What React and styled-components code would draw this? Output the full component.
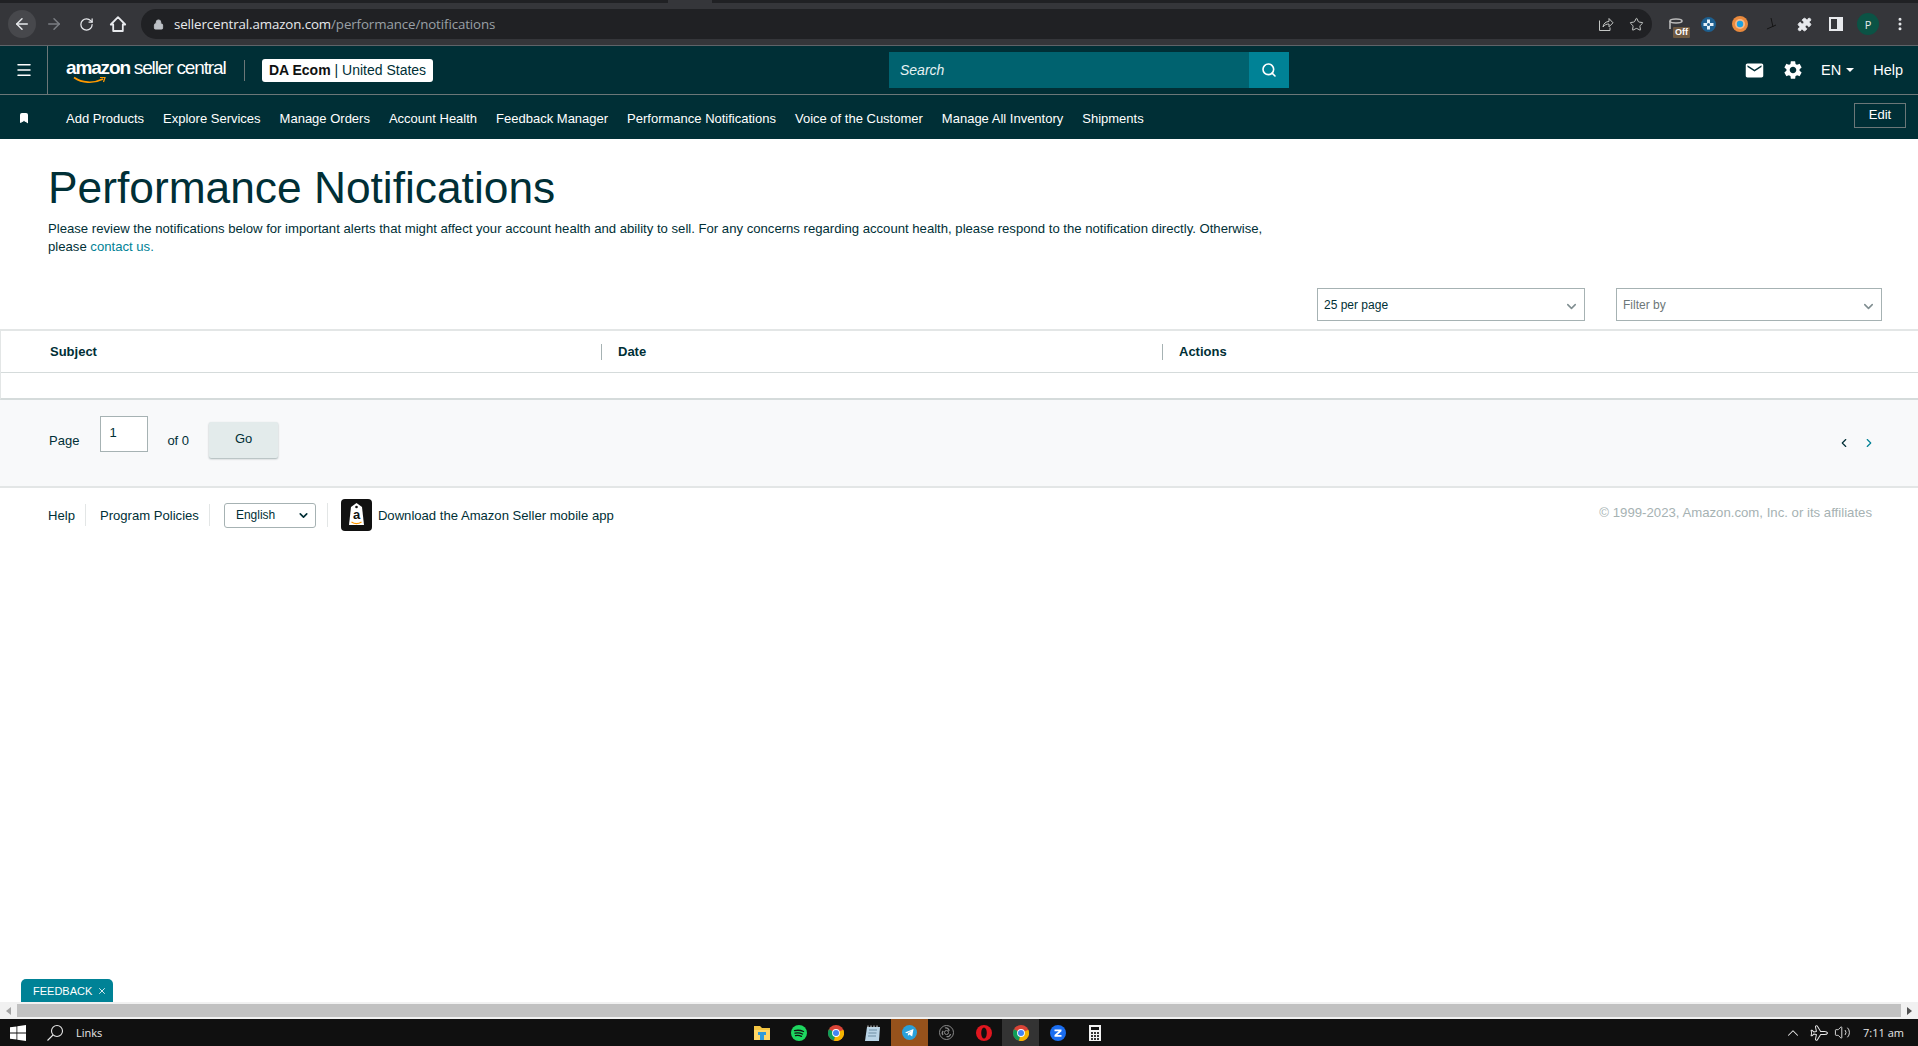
import React from 'react';
import styled, { createGlobalStyle } from 'styled-components';
import {
  ArrowLeft,
  ArrowRight,
  RotateCw,
  Lock,
  Star,
  Puzzle,
  Search,
  Menu,
  Bookmark,
  ChevronDown,
  ChevronLeft,
  ChevronRight,
  ChevronUp,
  X,
  MoreVertical,
  Plane,
  Volume2,
} from 'lucide-react';
import { MdEmail, MdSettings } from 'react-icons/md';

const navLinks = [
  'Add Products',
  'Explore Services',
  'Manage Orders',
  'Account Health',
  'Feedback Manager',
  'Performance Notifications',
  'Voice of the Customer',
  'Manage All Inventory',
  'Shipments',
];

const columns = ['Subject', 'Date', 'Actions'];

const GlobalStyle = createGlobalStyle`
  html, body {
    margin: 0;
    height: 100%;
    overflow: hidden;
    background: #fff;
    font-family: "Liberation Sans", Arial, sans-serif;
  }
  * {
    box-sizing: border-box;
  }
`;

const Page = styled.div`
  height: 100vh;
  display: flex;
  flex-direction: column;
`;

/* browser chrome */
const TabStrip = styled.div`
  height: 3px;
  background: #202124;
  flex: none;
`;

const ActiveTab = styled.div`
  width: 44px;
  height: 3px;
  margin-left: 668px;
  background: #35363a;
`;

const Toolbar = styled.div`
  height: 43px;
  flex: none;
  display: flex;
  align-items: center;
  background: #35363a;
  border-bottom: 1px solid #5f6368;
  padding-left: 8px;
`;

const ToolButton = styled.div`
  width: 28px;
  height: 28px;
  flex: none;
  margin-right: 4px;
  border-radius: 50%;
  display: flex;
  align-items: center;
  justify-content: center;
  color: ${(p) => p.$color || '#e8eaed'};
  background: ${(p) => (p.$active ? '#47484c' : 'transparent')};
  position: relative;
`;

const Omnibox = styled.div`
  width: 1511px;
  height: 30px;
  flex: none;
  margin-left: 5px;
  margin-right: 10px;
  border-radius: 15px;
  background: #202124;
  display: flex;
  align-items: center;
  padding: 0 8px 0 12px;
  color: #bdc1c6;
`;

const Url = styled.div`
  margin-left: 10px;
  font-family: "Open Sans", sans-serif;
  font-size: 13.3px;
  letter-spacing: -0.1px;
  color: #9aa0a6;
  flex: 1;
  span {
    color: #e8eaed;
  }
`;

const OmniIcon = styled.div`
  margin-left: 15px;
  display: flex;
  color: #c4c7c5;
`;

const OffBadge = styled.span`
  position: absolute;
  right: 0;
  bottom: 0;
  background: #6f5a41;
  color: #fff;
  font-size: 9px;
  font-weight: bold;
  line-height: 11px;
  padding: 0 2px;
  border-radius: 1px;
`;

const Avatar = styled.div`
  width: 22px;
  height: 22px;
  border-radius: 50%;
  background: #0b5345;
  color: #e8eaed;
  font-family: "Open Sans", sans-serif;
  font-size: 11px;
  display: flex;
  align-items: center;
  justify-content: center;
`;

/* seller central header */
const TopNav = styled.header`
  height: 49px;
  flex: none;
  display: flex;
  align-items: center;
  background: #002f36;
  border-bottom: 1px solid #6c7778;
  color: #fff;
`;

const MenuCell = styled.div`
  width: 48px;
  height: 100%;
  display: flex;
  align-items: center;
  justify-content: center;
  border-right: 1px solid #6c7778;
`;

const Logo = styled.div`
  position: relative;
  margin-left: 18px;
  width: 160px;
  height: 30px;
  display: flex;
  align-items: baseline;
  white-space: nowrap;
  font-size: 19px;
  line-height: 26px;
  letter-spacing: -1.15px;
`;

const LogoBold = styled.b`
  font-weight: bold;
  margin-right: 4px;
`;

const Smile = styled.svg`
  position: absolute;
  left: 7px;
  top: 21px;
`;

const AccountBox = styled.div`
  margin-left: 18px;
  padding-left: 18px;
  position: relative;
  &::before {
    content: '';
    position: absolute;
    left: 0;
    top: 1px;
    bottom: 1px;
    width: 1px;
    background: #6c7778;
  }
`;

const AccountPill = styled.div`
  width: 171px;
  height: 23px;
  border-radius: 3px;
  background: #fff;
  color: #002f36;
  font-size: 14px;
  line-height: 23px;
  text-align: center;
  white-space: nowrap;
  b {
    color: #0f1111;
  }
`;

const SearchBox = styled.div`
  margin-left: 456px;
  width: 400px;
  height: 36px;
  display: flex;
  background: #00626f;
`;

const SearchText = styled.div`
  flex: 1;
  padding-left: 11px;
  font-size: 14px;
  font-style: italic;
  line-height: 36px;
  color: #e6f1f2;
`;

const SearchButton = styled.div`
  width: 40px;
  display: flex;
  align-items: center;
  justify-content: center;
  background: #008296;
`;

const TopActions = styled.div`
  margin-left: auto;
  padding-right: 15px;
  display: flex;
  align-items: center;
`;

const ActionIcon = styled.div`
  display: flex;
  margin-right: ${(p) => p.$gap}px;
`;

const ActionText = styled.div`
  font-size: 14.5px;
  margin-right: ${(p) => p.$gap || 0}px;
  display: flex;
  align-items: center;
`;

const Caret = styled.span`
  margin-left: 5px;
  width: 0;
  height: 0;
  border-left: 4px solid transparent;
  border-right: 4px solid transparent;
  border-top: 4px solid #fff;
`;

const FavBar = styled.nav`
  height: 44px;
  flex: none;
  display: flex;
  align-items: center;
  background: #002f36;
  color: #fff;
  padding: 0 12px 0 18px;
`;

const FavIcon = styled.div`
  width: 48px;
  display: flex;
  margin-top: 1px;
`;

const FavLinks = styled.div`
  display: flex;
  gap: 19px;
  font-size: 13px;
  margin-top: 2px;
`;

const EditButton = styled.div`
  margin-left: auto;
  width: 52px;
  height: 25px;
  margin-top: -3px;
  border: 1px solid #6c7778;
  font-size: 13px;
  line-height: 22px;
  text-align: center;
`;

/* page content */
const Main = styled.main`
  flex: 1;
  min-height: 0;
  display: flex;
  flex-direction: column;
  color: #002f36;
`;

const Heading = styled.div`
  padding: 28px 48px 0;
`;

const Title = styled.h1`
  margin: 0;
  font-size: 44.3px;
  font-weight: normal;
  line-height: 41px;
  padding: 0;
`;

const Intro = styled.p`
  margin: 12px 0 0;
  width: 1240px;
  font-size: 13.13px;
  line-height: 18px;
  color: #002f36;
  a {
    color: #008296;
    text-decoration: none;
  }
`;

const Filters = styled.div`
  margin-top: 32px;
  padding-right: 36px;
  display: flex;
  justify-content: flex-end;
  gap: 31px;
`;

const SelectBox = styled.div`
  width: ${(p) => p.$width}px;
  height: 33px;
  border: 1px solid #a6b2b3;
  padding: 0 6px;
  display: flex;
  align-items: center;
  justify-content: space-between;
  font-size: 12px;
  color: ${(p) => (p.$muted ? '#6c7778' : '#002f36')};
  svg {
    color: #7f8d90;
    margin-top: 3px;
    margin-right: -1px;
  }
`;

const Table = styled.div`
  margin-top: 8px;
  border-top: 2px solid #e3e6e6;
  border-left: 1px solid #e3e6e6;
  border-bottom: 2px solid #d5dbdb;
`;

const HeadRow = styled.div`
  height: 42px;
  display: grid;
  grid-template-columns: 600px 561px 1fr;
  align-items: center;
  border-bottom: 1px solid #d5dbdb;
`;

const HeadCell = styled.div`
  height: 16px;
  line-height: 16px;
  padding-left: ${(p) => (p.$first ? 49 : 16)}px;
  border-left: ${(p) => (p.$first ? 'none' : '1px solid #a6b2b3')};
  font-size: 13px;
  font-weight: bold;
  color: #002f36;
`;

const EmptyRow = styled.div`
  height: 25px;
`;

const Pagination = styled.div`
  height: 88px;
  flex: none;
  display: flex;
  align-items: flex-start;
  padding: 16px 42px 0 49px;
  background: #f8f9fa;
  border-bottom: 2px solid #e3e6e6;
  font-size: 13px;
  color: #002f36;
`;

const PageLabel = styled.div`
  margin-top: 17px;
`;

const PageInput = styled.div`
  width: 48px;
  height: 36px;
  margin: 0 19px 0 21px;
  padding: 8px 8px;
  background: #fff;
  border: 1px solid #a6b2b3;
`;

const GoButton = styled.div`
  width: 69px;
  height: 36px;
  margin: 6px 0 0 20px;
  border-radius: 2px;
  background: #e3ebeb;
  box-shadow: 0 1px 2px #a6b2b3;
  text-align: center;
  line-height: 33px;
`;

const Pager = styled.div`
  margin: 20px 0 0 auto;
  display: flex;
  gap: 11px;
  color: #002f36;
`;

const Footer = styled.footer`
  padding: 11px 46px 0 48px;
  display: flex;
  align-items: center;
  font-size: 13.1px;
  color: #002f36;
`;

const FooterLink = styled.div`
  padding-right: 10px;
  margin-right: 14px;
  height: 22px;
  line-height: 24px;
  border-right: 1px solid #e3e6e6;
`;

const LangSelect = styled.div`
  width: 92px;
  height: 25px;
  padding: 0 5px 0 11px;
  border: 1px solid #a6b2b3;
  border-radius: 3px;
  font-size: 12px;
  display: flex;
  align-items: center;
  justify-content: space-between;
`;

const FooterDivider = styled.div`
  width: 1px;
  height: 24px;
  margin: 0 13px 0 11px;
  background: #e3e6e6;
`;

const AppBadge = styled.div`
  width: 31px;
  height: 32px;
  margin-right: 6px;
  border-radius: 4px;
  background: #111;
  display: flex;
`;

const Copyright = styled.div`
  margin: -6px 0 0 auto;
  font-size: 13.2px;
  color: #a6b2b3;
`;

const Feedback = styled.div`
  margin: auto 0 0 21px;
  width: 92px;
  height: 23px;
  flex: none;
  display: flex;
  align-items: center;
  gap: 5px;
  padding-left: 12px;
  border-radius: 5px 5px 0 0;
  background: #008296;
  color: #fff;
  font-size: 11px;
`;

const ScrollBar = styled.div`
  height: 17px;
  flex: none;
  display: flex;
  align-items: center;
  background: #f1f1f1;
`;

const ScrollArrow = styled.span`
  width: 17px;
  flex: none;
  display: flex;
  justify-content: center;
  &::before {
    content: '';
    border-top: 4px solid transparent;
    border-bottom: 4px solid transparent;
    ${(p) => (p.$right ? 'border-left: 5px solid #505050;' : 'border-right: 5px solid #a3a3a3;')}
  }
`;

const ScrollThumb = styled.div`
  flex: 1;
  height: 13px;
  background: #c1c1c1;
`;

/* windows taskbar */
const Taskbar = styled.div`
  height: 27px;
  flex: none;
  display: flex;
  align-items: center;
  background: #101010;
  color: #e8e8e8;
  font-family: "Open Sans", sans-serif;
  font-size: 11px;
  position: relative;
`;

const StartCell = styled.div`
  margin-left: 10px;
  display: flex;
`;

const SearchCell = styled.div`
  margin-left: 20px;
  display: flex;
`;

const LinksLabel = styled.div`
  margin-left: 12px;
  width: 667px;
`;

const TaskIcons = styled.div`
  height: 100%;
  display: flex;
`;

const TaskIcon = styled.div`
  width: 37px;
  height: 100%;
  display: flex;
  align-items: center;
  justify-content: center;
  background: ${(p) => p.$bg || 'transparent'};
`;

const Tray = styled.div`
  margin-left: auto;
  display: flex;
  align-items: center;
  gap: 7px;
  padding-right: 14px;
  height: 100%;
`;

const TrayPlane = styled.div`
  display: flex;
  transform: rotate(45deg);
`;

const TrayTime = styled.div`
  margin-left: 5px;
`;

const ChromeGlyph = ({ size = 16 }) => (
  <svg width={size} height={size} viewBox="0 0 16 16">
    <circle cx="8" cy="8" r="8" fill="#db4437" />
    <path d="M8 8 1 4.2A8 8 0 0 0 6 15.8z" fill="#0f9d58" />
    <path d="M8 8 15.3 4.8A8 8 0 0 1 6 15.8z" fill="#f4b400" />
    <circle cx="8" cy="8" r="3.9" fill="#fff" />
    <circle cx="8" cy="8" r="3" fill="#4285f4" />
  </svg>
);

const App = () => {
  return (
    <Page>
      <GlobalStyle />
      <TabStrip>
        <ActiveTab />
      </TabStrip>
      <Toolbar>
        <ToolButton $active>
          <ArrowLeft size={18} strokeWidth={2} />
        </ToolButton>
        <ToolButton $color="#7b7e83">
          <ArrowRight size={18} strokeWidth={2} />
        </ToolButton>
        <ToolButton>
          <RotateCw size={15} strokeWidth={2} />
        </ToolButton>
        <ToolButton>
          <svg width="18" height="18" viewBox="0 0 18 18" fill="none" stroke="currentColor" strokeWidth="1.800">
            <path d="M9 2.200 1.800 9.500h2.400V16h9.600V9.500h2.400z" strokeLinejoin="round" />
          </svg>
        </ToolButton>
        <Omnibox>
          <Lock size={11} fill="#bdc1c6" />
          <Url>
            <span>sellercentral.amazon.com</span>/performance/notifications
          </Url>
          <OmniIcon>
            <svg width="16" height="16" viewBox="0 0 16 16" fill="none" stroke="currentColor" strokeWidth="1">
              <path d="M1.500 4.500v10h10.500v-3" />
              <path d="M5 11c.3-3.500 3-5.500 6-5.500V2.500l4 4.300-4 4V8c-2.500 0-4.500.8-6 3z" strokeLinejoin="round" />
            </svg>
          </OmniIcon>
          <OmniIcon>
            <Star size={15} strokeWidth={1.6} />
          </OmniIcon>
        </Omnibox>
        <ToolButton>
          <svg width="16" height="12" viewBox="0 0 16 12" fill="none" stroke="#bbb" strokeWidth="1.6">
            <ellipse cx="8" cy="3" rx="6" ry="2" />
            <path d="M2 3v8" />
          </svg>
          <OffBadge>Off</OffBadge>
        </ToolButton>
        <ToolButton>
          <svg width="15" height="15" viewBox="0 0 15 15">
            <circle cx="7.5" cy="7.5" r="7.5" fill="#1d5f8f" />
            <path d="M6 2.5h3V6h3.5v3H9v3.5H6V9H2.500V6H6z" fill="#e4f0f8" />
            <circle cx="7.500" cy="7.500" r="1.500" fill="#1d5f8f" />
          </svg>
        </ToolButton>
        <ToolButton>
          <svg width="16" height="16" viewBox="0 0 16 16">
            <circle cx="8" cy="8" r="8" fill="#ea8a3d" />
            <circle cx="8" cy="8" r="5" fill="#f5b98a" />
            <circle cx="8" cy="8" r="3.200" fill="#1ba1e2" />
          </svg>
        </ToolButton>
        <ToolButton>
          <svg width="12" height="14" viewBox="0 0 12 14" fill="none" stroke="#151515" strokeWidth="1">
            <path d="M1 12 10 8M5 1l2 9" />
          </svg>
        </ToolButton>
        <ToolButton>
          <Puzzle size={15} fill="#e8eaed" strokeWidth={1.5} />
        </ToolButton>
        <ToolButton>
          <svg width="14" height="14" viewBox="0 0 14 14">
            <path d="M0 0h14v14H0z" fill="#e8eaed" />
            <path d="M2 2h6v10H2z" fill="#35363a" />
          </svg>
        </ToolButton>
        <ToolButton>
          <Avatar>P</Avatar>
        </ToolButton>
        <ToolButton>
          <MoreVertical size={16} strokeWidth={2.5} />
        </ToolButton>
      </Toolbar>

      <TopNav>
        <MenuCell>
          <Menu size={18} strokeWidth={2} />
        </MenuCell>
        <Logo>
          <LogoBold>amazon</LogoBold> seller central
          <Smile width="34" height="9" viewBox="0 0 34 9" fill="none">
            <path d="M1 1.500C9 7 20 8 30 3" stroke="#f90" strokeWidth="1.700" />
            <path d="M27 1.500h5l-1.500 4.500" stroke="#f90" strokeWidth="1.200" />
          </Smile>
        </Logo>
        <AccountBox>
          <AccountPill>
            <b>DA Ecom</b> | United States
          </AccountPill>
        </AccountBox>
        <SearchBox>
          <SearchText>Search</SearchText>
          <SearchButton>
            <Search size={16} strokeWidth={2.4} />
          </SearchButton>
        </SearchBox>
        <TopActions>
          <ActionIcon $gap={17}>
            <MdEmail size={21} />
          </ActionIcon>
          <ActionIcon $gap={17}>
            <MdSettings size={22} />
          </ActionIcon>
          <ActionText $gap={19}>
            EN
            <Caret />
          </ActionText>
          <ActionText>Help</ActionText>
        </TopActions>
      </TopNav>

      <FavBar>
        <FavIcon>
          <Bookmark size={12} fill="#fff" strokeWidth={2} />
        </FavIcon>
        <FavLinks>
          {navLinks.map((link) => (
            <span key={link}>{link}</span>
          ))}
        </FavLinks>
        <EditButton>Edit</EditButton>
      </FavBar>

      <Main>
        <Heading>
          <Title>Performance Notifications</Title>
          <Intro>
            Please review the notifications below for important alerts that might affect your account health and
            ability to sell. For any concerns regarding account health, please respond to the notification directly.
            Otherwise, please <a href="#contact">contact us.</a>
          </Intro>
        </Heading>

        <Filters>
          <SelectBox $width={268}>
            25 per page
            <ChevronDown size={15} strokeWidth={2.4} />
          </SelectBox>
          <SelectBox $width={266} $muted>
            Filter by
            <ChevronDown size={15} strokeWidth={2.4} />
          </SelectBox>
        </Filters>

        <Table>
          <HeadRow>
            {columns.map((column, i) => (
              <HeadCell key={column} $first={i === 0}>
                {column}
              </HeadCell>
            ))}
          </HeadRow>
          <EmptyRow />
        </Table>

        <Pagination>
          <PageLabel>Page</PageLabel>
          <PageInput>1</PageInput>
          <PageLabel>of 0</PageLabel>
          <GoButton>Go</GoButton>
          <Pager>
            <ChevronLeft size={14} strokeWidth={2} />
            <ChevronRight size={14} strokeWidth={2} color="#008296" />
          </Pager>
        </Pagination>

        <Footer>
          <FooterLink>Help</FooterLink>
          <FooterLink>Program Policies</FooterLink>
          <LangSelect>
            English
            <ChevronDown size={13} strokeWidth={3} />
          </LangSelect>
          <FooterDivider />
          <AppBadge>
            <svg width="31" height="32" viewBox="0 0 31 32">
              <path d="M10 8 15.500 4 21 8l2 18H8z" fill="#fff" />
              <circle cx="15.500" cy="8" r="1.300" fill="#111" />
              <text x="15.500" y="20" textAnchor="middle" fontSize="13" fontWeight="bold" fontFamily="Liberation Sans" fill="#111">
                a
              </text>
              <path d="M10.500 23c3 2 7 2 10 0" fill="none" stroke="#f90" strokeWidth="1.200" />
            </svg>
          </AppBadge>
          Download the Amazon Seller mobile app
          <Copyright>© 1999-2023, Amazon.com, Inc. or its affiliates</Copyright>
        </Footer>

        <Feedback>
          FEEDBACK
          <X size={10} strokeWidth={2} />
        </Feedback>
      </Main>

      <ScrollBar>
        <ScrollArrow />
        <ScrollThumb />
        <ScrollArrow $right />
      </ScrollBar>

      <Taskbar>
        <StartCell>
          <svg width="16" height="16" viewBox="0 0 16 16" fill="#fff">
            <path d="M0 2.300 6.500 1.400v6.200H0zM7.300 1.300 16 0v7.600H7.300zM0 8.400h6.500v6.200L0 13.700zM7.300 8.400H16V16l-8.700-1.300z" />
          </svg>
        </StartCell>
        <SearchCell>
          <svg width="18" height="18" viewBox="0 0 18 18" fill="none" stroke="#e8e8e8" strokeWidth="1.100">
            <circle cx="11" cy="7" r="5.500" />
            <path d="M7 11 1.500 16.500" />
          </svg>
        </SearchCell>
        <LinksLabel>Links</LinksLabel>
        <TaskIcons>
          <TaskIcon>
            <svg width="16" height="14" viewBox="0 0 16 14">
              <path d="M0 0h6l2 2h8v12H0z" fill="#f4c542" />
              <path d="M0 4h16v10H0z" fill="#ffd768" />
              <path d="M4 6h8v3h-2v5H6V9H4z" fill="#2f9bdc" />
            </svg>
          </TaskIcon>
          <TaskIcon>
            <svg width="16" height="16" viewBox="0 0 16 16" fill="none">
              <circle cx="8" cy="8" r="8" fill="#1ed760" />
              <path d="M3.500 5.700c3-.8 6-.6 9 .8M4 8.200c2.500-.6 5-.4 7.500.8M4.500 10.600c2-.4 4-.3 6 .7" stroke="#111" strokeWidth="1.300" strokeLinecap="round" />
            </svg>
          </TaskIcon>
          <TaskIcon>
            <ChromeGlyph />
          </TaskIcon>
          <TaskIcon>
            <svg width="16" height="16" viewBox="0 0 16 16">
              <path d="M2 2h13l-1 14H0z" fill="#b9d4e6" />
              <path d="M4 5h8M3.500 8h8M3 11h8" stroke="#6d8da3" strokeWidth="1" />
              <path d="M3 .5v2M6 .5v2M9 .5v2M12 .5v2" stroke="#ddd" strokeWidth="1" />
            </svg>
          </TaskIcon>
          <TaskIcon $bg="#96521c">
            <svg width="15" height="15" viewBox="0 0 15 15">
              <circle cx="7.500" cy="7.500" r="7.500" fill="#2aa1da" />
              <path d="M3 7.500 11.500 4l-1.300 7.500-3-2-1.300 1.500V8.500L10 5.500 5 8.300z" fill="#fff" />
            </svg>
          </TaskIcon>
          <TaskIcon>
            <svg width="15" height="15" viewBox="0 0 15 15" fill="none" stroke="#8a8a8a">
              <circle cx="7.500" cy="7.500" r="7" strokeWidth="1" />
              <circle cx="7.500" cy="7.500" r="2" strokeWidth="1" />
              <path d="M6 3a3 3 0 0 1 4 3M11.500 9a3 3 0 0 1-4 2.500M4 10a3 3 0 0 1 .2-4" strokeWidth="1.300" />
            </svg>
          </TaskIcon>
          <TaskIcon>
            <svg width="16" height="16" viewBox="0 0 16 16">
              <circle cx="8" cy="8" r="8" fill="#e0161f" />
              <ellipse cx="8" cy="8" rx="2.800" ry="5.600" fill="#101010" />
            </svg>
          </TaskIcon>
          <TaskIcon $bg="#333">
            <ChromeGlyph />
          </TaskIcon>
          <TaskIcon>
            <svg width="16" height="16" viewBox="0 0 16 16">
              <circle cx="8" cy="8" r="8" fill="#1a6df0" />
              <path d="M4.500 4.500h7v1.800L7.300 10h4.200v1.800h-7V10l4.200-3.700H4.500z" fill="#fff" />
            </svg>
          </TaskIcon>
          <TaskIcon>
            <svg width="12" height="16" viewBox="0 0 12 16">
              <path d="M0 0h12v16H0z" fill="#f2f2f2" />
              <path d="M2 2h8v3H2z" fill="#101010" />
              <path d="M2 7h2v2H2zM5 7h2v2H5zM8 7h2v2H8zM2 10h2v2H2zM5 10h2v2H5zM8 10h2v2H8zM2 13h2v2H2zM5 13h2v2H5zM8 13h2v2H8z" fill="#333" />
            </svg>
          </TaskIcon>
        </TaskIcons>
        <Tray>
          <ChevronUp size={18} strokeWidth={1.4} />
          <TrayPlane>
            <Plane size={18} strokeWidth={1.3} />
          </TrayPlane>
          <Volume2 size={17} strokeWidth={1.3} />
          <TrayTime>7:11 am</TrayTime>
        </Tray>
      </Taskbar>
    </Page>
  );
};

export default App;
